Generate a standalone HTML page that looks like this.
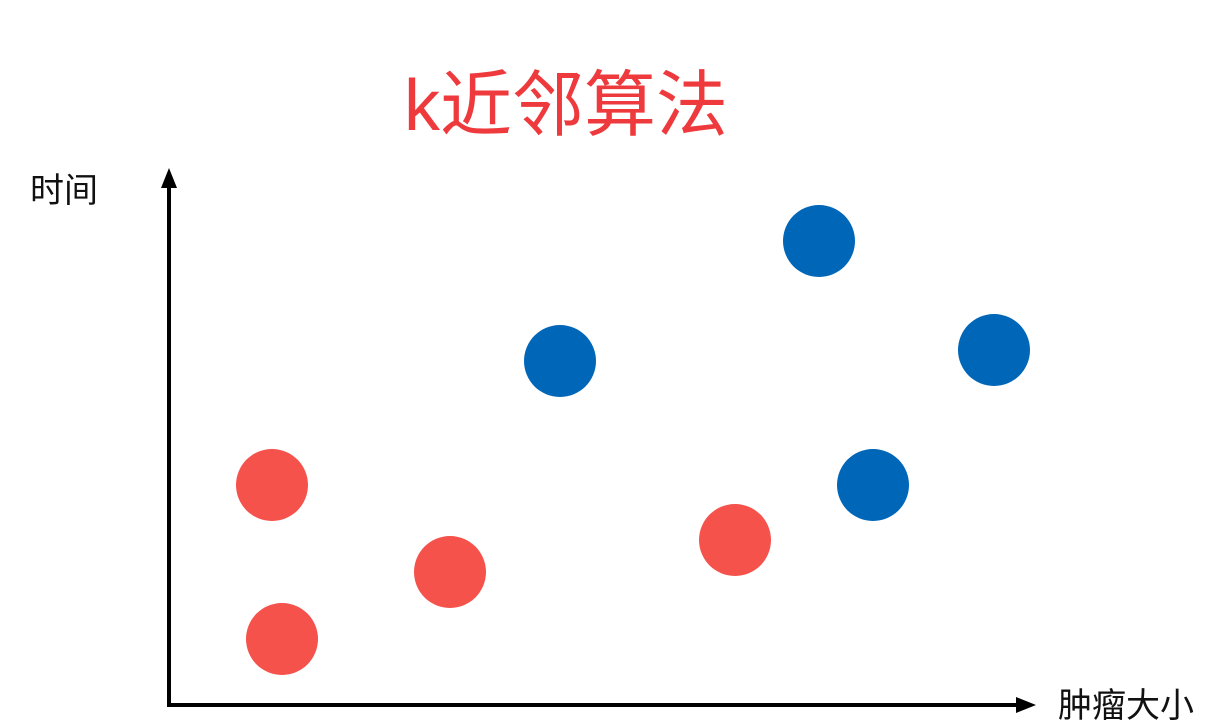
<!DOCTYPE html>
<html><head><meta charset="utf-8"><style>
html,body{margin:0;padding:0;background:#fff;width:1219px;height:724px;overflow:hidden}
</style></head><body>
<svg width="1219" height="724" xmlns="http://www.w3.org/2000/svg" style="display:block">
<rect width="1219" height="724" fill="#fff"/>
<text x="404" y="130" font-family="'Liberation Sans','Noto Sans CJK SC',sans-serif" font-size="72" fill="#ee3a3d">k近邻算法</text>
<text x="30" y="202" font-family="'Liberation Sans','Noto Sans CJK SC',sans-serif" font-size="34" fill="#111">时间</text>
<text x="1058" y="717" font-family="'Liberation Sans','Noto Sans CJK SC',sans-serif" font-size="34" fill="#111">肿瘤大小</text>
<line x1="169" y1="185" x2="169" y2="707" stroke="#000" stroke-width="4"/>
<polygon points="169,168 161,188 177,188" fill="#000"/>
<line x1="167" y1="705" x2="1022" y2="705" stroke="#000" stroke-width="4"/>
<polygon points="1036,705 1016,697 1016,713" fill="#000"/>
<g fill="#0066b8">
<circle cx="819" cy="241" r="36"/>
<circle cx="560" cy="361" r="36"/>
<circle cx="994" cy="350" r="36"/>
<circle cx="873" cy="485" r="36"/>
</g>
<g fill="#f5524c">
<circle cx="272" cy="485" r="36"/>
<circle cx="450" cy="572" r="36"/>
<circle cx="282" cy="639" r="36"/>
<circle cx="735" cy="540" r="36"/>
</g>
</svg>
</body></html>
